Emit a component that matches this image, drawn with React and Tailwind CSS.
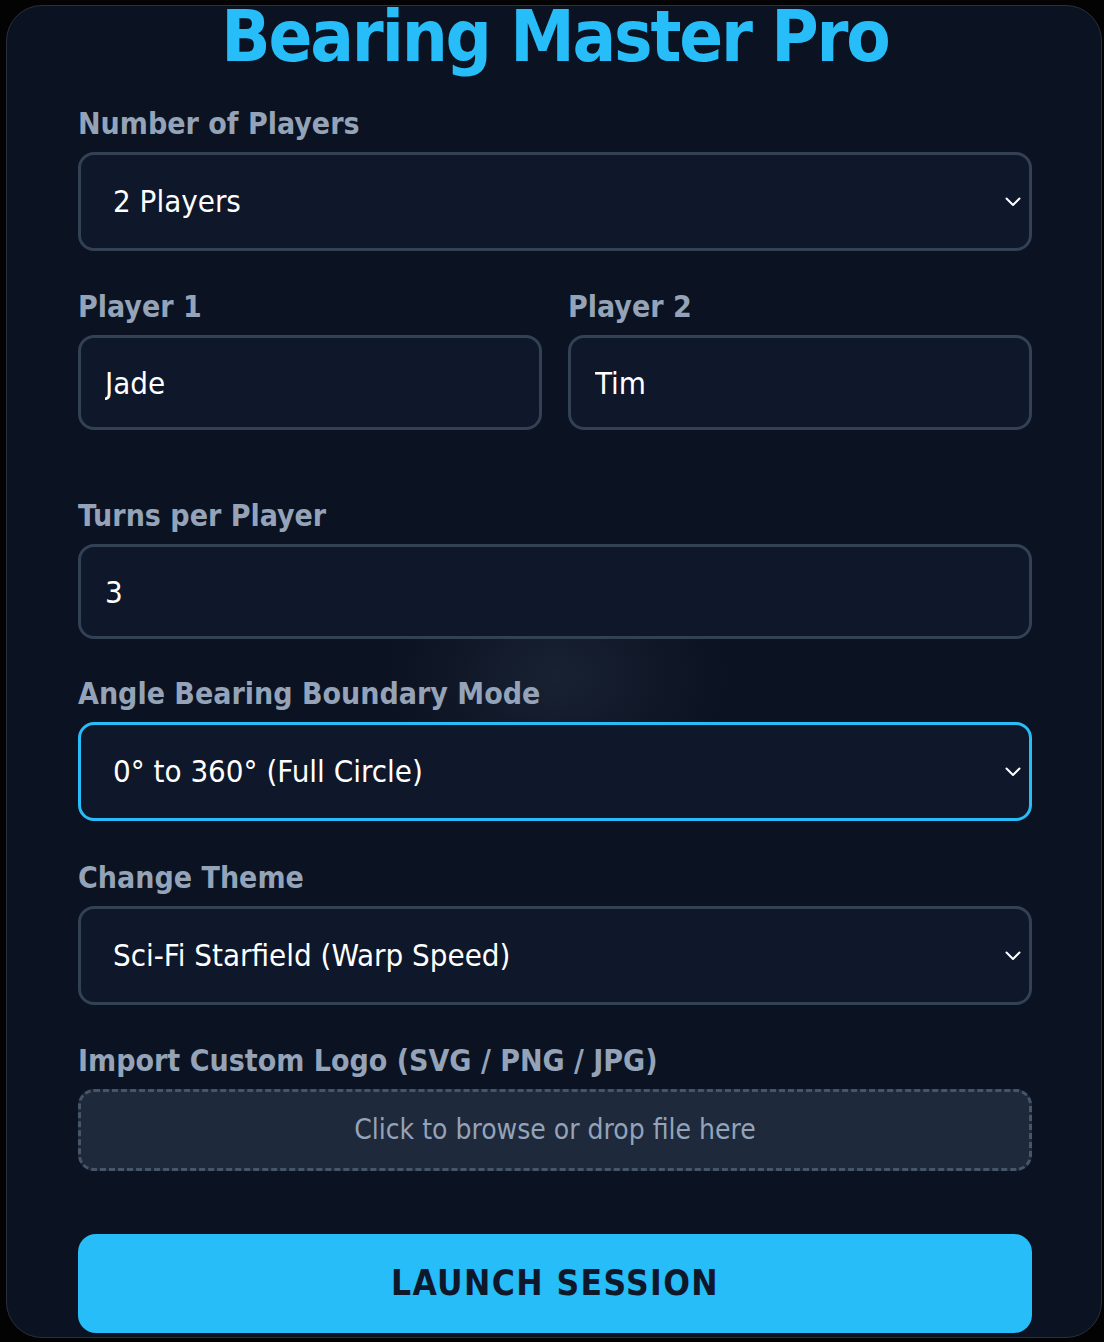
import React, { useState } from 'react';

const font = { fontFamily: '"DejaVu Sans Condensed", "DejaVu Sans", sans-serif' };

function Chevron() {
  return (
    <svg width="16" height="10" viewBox="0 0 16 10" fill="none" className="pointer-events-none absolute right-[11px] top-1/2 -translate-y-1/2">
      <path d="M1.5 1.5 L8 8 L14.5 1.5" stroke="#ffffff" strokeWidth="2" strokeLinecap="round" strokeLinejoin="round" />
    </svg>
  );
}

function Label({ children }) {
  return <label className="block text-[30px] font-bold leading-[34px] text-[#94a3b8] mb-[11px]">{children}</label>;
}

function Select({ value, onChange, options, focused }) {
  return (
    <div className="relative">
      <select
        value={value}
        onChange={(e) => onChange(e.target.value)}
        style={font}
        className={`block w-full h-[99px] appearance-none rounded-[16px] border-[3px] bg-[#0f172a] pl-[32px] pr-[40px] text-[31px] text-white outline-none ${
          focused ? 'border-[#26bdf8]' : 'border-[#334155]'
        }`}
      >
        {options.map((o) => (
          <option key={o}>{o}</option>
        ))}
      </select>
      <Chevron />
    </div>
  );
}

function TextInput({ value, onChange }) {
  return (
    <input
      value={value}
      onChange={(e) => onChange(e.target.value)}
      style={font}
      className="block w-full h-[95px] rounded-[16px] border-[3px] border-[#334155] bg-[#0f172a] px-[24px] text-[31px] text-white outline-none"
    />
  );
}

export default function App() {
  const [players, setPlayers] = useState('2 Players');
  const [p1, setP1] = useState('Jade');
  const [p2, setP2] = useState('Tim');
  const [turns, setTurns] = useState('3');
  const [mode, setMode] = useState('0° to 360° (Full Circle)');
  const [theme, setTheme] = useState('Sci-Fi Starfield (Warp Speed)');

  return (
    <div className="min-h-screen bg-[#030304] pt-[5px] pl-[6px]" style={font}>
      <div className="relative w-[1096px] h-[1333px] overflow-hidden rounded-[36px] border border-[#2a303b] bg-[#0b1221] pl-[71px] pr-[69px]">
        {/* faint glow behind the form */}
        <div className="pointer-events-none absolute left-[350px] top-[520px] h-[300px] w-[400px] bg-[radial-gradient(ellipse_at_center,rgba(40,52,72,0.45)_0%,rgba(11,18,33,0)_60%)]" />

        <div className="relative">
          <h1 className="mt-[-6px] text-center text-[72px] font-bold leading-none tracking-[-0.03em] text-[#26bdf8]">
            Bearing Master Pro
          </h1>

          <div className="mt-[35px]">
            <Label>Number of Players</Label>
            <Select value={players} onChange={setPlayers} options={['1 Player', '2 Players', '3 Players', '4 Players']} />
          </div>

          <div className="mt-[39px] grid grid-cols-2 gap-[26px]">
            <div>
              <Label>Player 1</Label>
              <TextInput value={p1} onChange={setP1} />
            </div>
            <div>
              <Label>Player 2</Label>
              <TextInput value={p2} onChange={setP2} />
            </div>
          </div>

          <div className="mt-[69px]">
            <Label>Turns per Player</Label>
            <TextInput value={turns} onChange={setTurns} />
          </div>

          <div className="mt-[38px]">
            <Label>Angle Bearing Boundary Mode</Label>
            <Select
              value={mode}
              onChange={setMode}
              focused
              options={['0° to 360° (Full Circle)', '-180° to 180° (Signed)', '0° to 180° (Half Circle)']}
            />
          </div>

          <div className="mt-[40px]">
            <Label>Change Theme</Label>
            <Select
              value={theme}
              onChange={setTheme}
              options={['Sci-Fi Starfield (Warp Speed)', 'Classic Compass', 'Nautical Chart']}
            />
          </div>

          <div className="mt-[39px]">
            <Label>Import Custom Logo (SVG / PNG / JPG)</Label>
            <div className="flex h-[82px] items-center justify-center rounded-[16px] border-[3px] border-dashed border-[#475569] bg-[#1e293b] text-[28px] text-[#94a3b8]">
              Click to browse or drop file here
            </div>
          </div>

          <button className="mt-[63px] flex h-[99px] w-full items-center justify-center rounded-[18px] bg-[#26bdf8] text-[35px] font-bold tracking-[0.04em] text-[#0f172a]">
            LAUNCH SESSION
          </button>
        </div>
      </div>
    </div>
  );
}
